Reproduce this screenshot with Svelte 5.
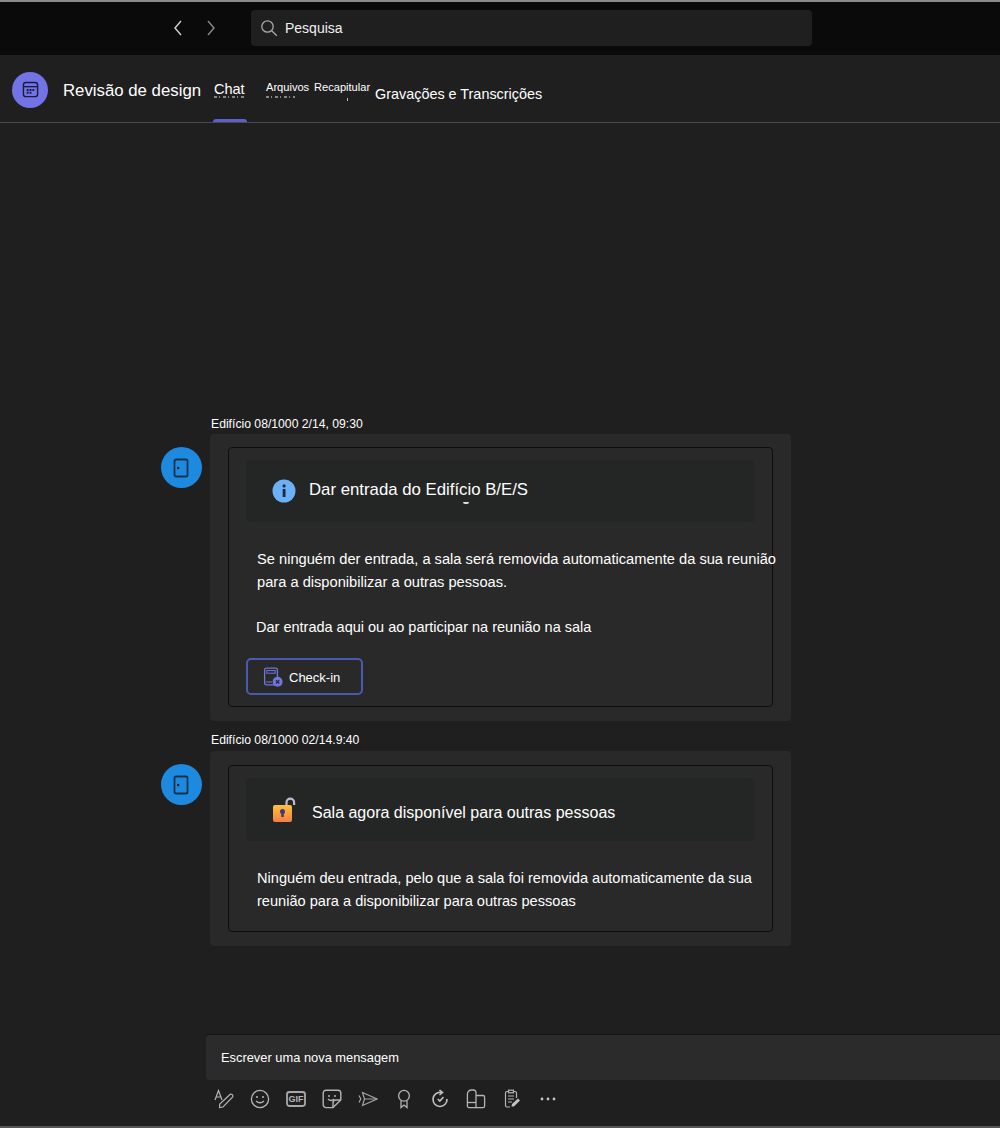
<script lang="ts">
  // Chat pane of a meeting room check-in conversation.
  const TABS = [
    { label: 'Chat', cls: 'chat' },
    { label: 'Arquivos', cls: 'small files' },
    { label: 'Recapitular', cls: 'small recap' },
    { label: 'Gravações e Transcrições', cls: 'rec' },
  ];
</script>

<div class="app">
  <div class="topbar">
    <div class="nav">
      <svg width="12" height="18" viewBox="0 0 12 18"><path d="M9 2 L3 9 L9 16" fill="none" stroke="#d0d0d0" stroke-width="1.4" /></svg>
      <svg width="12" height="18" viewBox="0 0 12 18"><path d="M3 2 L9 9 L3 16" fill="none" stroke="#8a8a8a" stroke-width="1.4" /></svg>
    </div>
    <div class="search">
      <svg width="18" height="18" viewBox="0 0 18 18"><circle cx="7.5" cy="7.5" r="5.7" fill="none" stroke="#a8a8a8" stroke-width="1.3" /><path d="M11.7 11.7 L16.8 16.8" stroke="#a8a8a8" stroke-width="1.3" /></svg>
      <span>Pesquisa</span>
    </div>
  </div>

  <header class="head">
    <div class="cal">
      <svg width="17" height="17" viewBox="0 0 18 18">
        <rect x="1.5" y="1.5" width="15" height="15" rx="2.6" fill="none" stroke="#1b1b3a" stroke-width="1.5" />
        <path d="M2 6 H16" stroke="#1b1b3a" stroke-width="1.4" />
        <path d="M5 8.5h2v2H5zM8 8.5h2v2H8zM11 8.5h2v2h-2zM5 11.5h2v2H5zM8 11.5h2v2H8z" fill="#1b1b3a" />
      </svg>
    </div>
    <div class="title">Revisão de design</div>
    <nav class="tabs">
      <!-- leftover marks under the labels -->
      <i class="ghost g-chat"></i>
      <i class="ghost g-files"></i>
      <i class="speck"></i>
      {#each TABS as tab (tab.label)}
        <span class={tab.cls}>{tab.label}</span>
      {/each}
      <i class="indicator"></i>
    </nav>
  </header>

  <main class="thread">
    <div class="msg">
      <div class="who">Edifício 08/1000 2/14, 09:30</div>
      <div class="avatar">
        <svg width="16" height="20" viewBox="0 0 16 20"><rect x="1.5" y="1.5" width="13" height="17" rx="1.6" fill="none" stroke="#10324f" stroke-width="1.8" /><circle cx="5.2" cy="10" r="1.2" fill="#0b2238" /></svg>
      </div>
      <div class="card first">
        <div class="inner">
          <div class="cardhead info">
            <svg width="24" height="24" viewBox="0 0 24 24"><circle cx="12" cy="12" r="11.5" fill="#6cb0f8" /><rect x="10.7" y="10" width="2.8" height="8" rx="0.6" fill="#1d2a3a" /><circle cx="12.1" cy="6.9" r="1.6" fill="#1d2a3a" /></svg>
            <span>Dar entrada do Edifício B/E/S</span>
            <i class="tick"></i>
          </div>
          <p class="body b1">Se ninguém der entrada, a sala será removida automaticamente da sua reunião<br />para a disponibilizar a outras pessoas.</p>
          <p class="body b2">Dar entrada aqui ou ao participar na reunião na sala</p>
          <button type="button" class="checkin">
            <svg width="20" height="20" viewBox="0 0 20 20">
              <rect x="1.6" y="1.2" width="12.8" height="16.6" rx="1.8" fill="none" stroke="#6f78d8" stroke-width="1.3" />
              <rect x="3.8" y="3.6" width="8.4" height="2.6" fill="none" stroke="#6f78d8" stroke-width="1" />
              <path d="M3 15h6" stroke="#6f78d8" stroke-width="1" />
              <circle cx="14.6" cy="14.8" r="5" fill="#6f78d8" />
              <path d="M12.9 13.1 L16.3 16.5 M16.3 13.1 L12.9 16.5" stroke="#22243c" stroke-width="1.2" />
            </svg>
            <span>Check-in</span>
          </button>
        </div>
      </div>
    </div>

    <div class="msg">
      <div class="who">Edifício 08/1000 02/14.9:40</div>
      <div class="avatar">
        <svg width="16" height="20" viewBox="0 0 16 20"><rect x="1.5" y="1.5" width="13" height="17" rx="1.6" fill="none" stroke="#10324f" stroke-width="1.8" /><circle cx="5.2" cy="10" r="1.2" fill="#0b2238" /></svg>
      </div>
      <div class="card second">
        <div class="inner">
          <div class="cardhead lock">
            <svg width="24" height="26" viewBox="0 0 24 26">
              <defs>
                <linearGradient id="lockfill" x1="0" y1="0" x2="0" y2="1">
                  <stop offset="0" stop-color="#fcc23c" />
                  <stop offset="1" stop-color="#f57f42" />
                </linearGradient>
              </defs>
              <path d="M14.5 9 V5.5 a3.8 3.8 0 0 1 7.6 0 V8" fill="none" stroke="#c3bacb" stroke-width="2.2" />
              <rect x="1" y="8" width="19" height="17" rx="2" fill="url(#lockfill)" />
              <circle cx="10.5" cy="14.5" r="2.5" fill="#453a78" />
              <rect x="9.2" y="15" width="2.6" height="5" fill="#453a78" />
            </svg>
            <span>Sala agora disponível para outras pessoas</span>
          </div>
          <p class="body b3">Ninguém deu entrada, pelo que a sala foi removida automaticamente da sua<br />reunião para a disponibilizar para outras pessoas</p>
        </div>
      </div>
    </div>
  </main>

  <footer class="compose">
    <div class="input">Escrever uma nova mensagem</div>
    <div class="tools">
      <svg width="20" height="20" viewBox="0 0 20 20" fill="none" stroke="#b4b4b4" stroke-width="1.2">
        <path d="M1 11 L4.5 1.5 L8 11 M2.2 8 H6.8" />
        <path d="M5.5 18.5 L5.8 15 L15.5 6 a1.7 1.7 0 0 1 3 2.2 L9 18 Z" />
      </svg>
      <svg width="20" height="20" viewBox="0 0 20 20" fill="none" stroke="#b4b4b4" stroke-width="1.3">
        <circle cx="10" cy="10" r="8.6" />
        <path d="M6 12 q4 3.6 8 0" />
        <circle cx="7" cy="8" r="1" fill="#b4b4b4" stroke="none" />
        <circle cx="13" cy="8" r="1" fill="#b4b4b4" stroke="none" />
      </svg>
      <svg width="20" height="20" viewBox="0 0 20 20">
        <rect x="1" y="3" width="18" height="14" rx="2.4" fill="none" stroke="#a8a8a8" stroke-width="1.8" />
        <text x="10" y="13.2" text-anchor="middle" class="gif">GIF</text>
      </svg>
      <svg width="20" height="20" viewBox="0 0 20 20" fill="none" stroke="#b4b4b4" stroke-width="1.4">
        <path d="M11 18.6 H4 a2.8 2.8 0 0 1 -2.8 -2.8 V4 A2.8 2.8 0 0 1 4 1.2 H16 A2.8 2.8 0 0 1 18.8 4 V11 Z" />
        <path d="M11 18.6 V14 a3 3 0 0 1 3 -3 H18.8" />
        <path d="M6 10 q3 3 6 0" />
        <circle cx="7" cy="7" r="1" fill="#b4b4b4" stroke="none" />
        <circle cx="13" cy="7" r="1" fill="#b4b4b4" stroke="none" />
      </svg>
      <svg width="20" height="20" viewBox="0 0 20 20" fill="none" stroke="#a4a4a4" stroke-width="1.2">
        <path d="M4.5 3.5 L19 10 L4.5 16.5 L6.5 10 Z" />
        <path d="M6.5 10 H19 M1 6.5 L2.8 10 L1 13.5" />
      </svg>
      <svg width="20" height="20" viewBox="0 0 20 20" fill="none" stroke="#b4b4b4" stroke-width="1.3">
        <circle cx="10" cy="6.8" r="5.4" />
        <path d="M7 11.5 V18.5 L10 16 L13 18.5 V11.5" />
      </svg>
      <svg width="20" height="20" viewBox="0 0 20 20" fill="none" stroke="#c4c4c4" stroke-width="1.6">
        <path d="M11 3.5 A7 7 0 1 0 17 10" />
        <path d="M9.5 1 L12.5 3.6 L9.5 6" />
        <path d="M7.8 10 L9.8 12 L13.5 8" />
      </svg>
      <svg width="20" height="20" viewBox="0 0 20 20" fill="none" stroke="#b4b4b4" stroke-width="1.3">
        <path d="M1.4 17 V5 a4 4 0 0 1 4 -4 H7.5 a2.5 2.5 0 0 1 2.5 2.5 V18.6 H3 a1.6 1.6 0 0 1 -1.6 -1.6 Z" />
        <path d="M10 6.5 H17 a1.6 1.6 0 0 1 1.6 1.6 V17 a1.6 1.6 0 0 1 -1.6 1.6 H10" />
        <path d="M1.4 13.5 H10" />
      </svg>
      <svg width="20" height="20" viewBox="0 0 20 20" fill="none" stroke="#b4b4b4" stroke-width="1.2">
        <path d="M8 18 H5 a1.5 1.5 0 0 1 -1.5 -1.5 V4 A1.5 1.5 0 0 1 5 2.5 H13 A1.5 1.5 0 0 1 14.5 4 V9" />
        <rect x="6.5" y="1.2" width="5" height="2.6" fill="#1f1f1f" />
        <path d="M6 7 H12 M6 10 H12 M6 13 H10" />
        <path d="M9.5 17.8 L10 15 L16 9.5 L18 11.5 L12.2 17.2 Z" fill="#c4c4c4" stroke="none" />
      </svg>
      <svg width="20" height="20" viewBox="0 0 20 20" fill="#c4c4c4">
        <circle cx="4" cy="10" r="1.4" />
        <circle cx="10" cy="10" r="1.4" />
        <circle cx="16" cy="10" r="1.4" />
      </svg>
    </div>
  </footer>
</div>

<style>
  :global(body) {
    margin: 0;
    background: #1f1f1f;
  }
  .app {
    height: 1128px;
    overflow: hidden;
    display: flex;
    flex-direction: column;
    background: #1f1f1f;
    color: #fff;
    font-family: "Liberation Sans", Arial, sans-serif;
    border-bottom: 2px solid #555;
    box-sizing: border-box;
  }
  .topbar {
    height: 55px;
    box-sizing: border-box;
    flex: 0 0 auto;
    display: flex;
    align-items: center;
    background: #0a0a0a;
    border-top: 2px solid #8a8a8a;
    padding: 0 0 2px 172px;
  }
  .nav {
    display: flex;
    gap: 21px;
    width: 79px;
  }
  .search {
    width: 561px;
    height: 36px;
    display: flex;
    align-items: center;
    gap: 7px;
    box-sizing: border-box;
    padding: 0 0 0 9px;
    border-radius: 4px;
    background: #1f1f1f;
    font-size: 14px;
    color: #f0f0f0;
  }
  .head {
    position: relative;
    height: 68px;
    box-sizing: border-box;
    flex: 0 0 auto;
    display: flex;
    align-items: center;
    padding: 0 0 0 12px;
    border-bottom: 1px solid #4a4a4a;
  }
  .cal {
    width: 36px;
    height: 36px;
    border-radius: 50%;
    background: #7373e8;
    display: flex;
    align-items: center;
    justify-content: center;
    margin: 2px 15px 0 0;
  }
  .title {
    font-size: 16.8px;
    margin-top: 4px;
    width: 151px;
  }
  .tabs {
    position: absolute;
    left: 0;
    top: 0;
    right: 0;
    bottom: 0;
    font-size: 14.5px;
  }
  .tabs span {
    position: absolute;
    white-space: nowrap;
  }
  .tabs .chat {
    left: 214px;
    top: 26px;
  }
  .tabs .small {
    font-size: 11.1px;
    top: 26px;
  }
  .tabs .files {
    left: 266px;
  }
  .tabs .recap {
    left: 314px;
  }
  .tabs .rec {
    left: 375px;
    top: 31px;
    font-size: 14.4px;
  }
  .ghost {
    position: absolute;
    top: 41px;
    height: 2px;
    opacity: 0.55;
    background: repeating-linear-gradient(90deg, #d8d8d8 0 3px, transparent 3px 5px, #d8d8d8 5px 6px, transparent 6px 9px);
  }
  .g-chat {
    left: 214px;
    width: 31px;
  }
  .g-files {
    left: 266px;
    width: 29px;
  }
  .speck {
    position: absolute;
    left: 347px;
    top: 43px;
    width: 1px;
    height: 3px;
    background: #bbb;
  }
  .indicator {
    position: absolute;
    left: 213px;
    bottom: 0;
    width: 34px;
    height: 3px;
    background: #5b5fc7;
    border-radius: 3px 3px 0 0;
  }
  .thread {
    flex: 1 1 auto;
    display: flex;
    flex-direction: column;
    padding: 292px 0 0 161px;
    gap: 11px;
  }
  .msg {
    display: grid;
    grid-template-columns: 40px 581px;
    column-gap: 9px;
  }
  .who {
    grid-column: 2;
    height: 19px;
    font-size: 12.2px;
    line-height: 18px;
    margin-left: 1px;
  }
  .msg + .msg .who {
    line-height: 17px;
  }
  .avatar {
    grid-column: 1;
    width: 41px;
    height: 41px;
    margin: 13px 0 0 -0.5px;
    border-radius: 50%;
    background: #1d8ae0;
    display: flex;
    align-items: center;
    justify-content: center;
  }
  .card {
    grid-column: 2;
    box-sizing: border-box;
    padding: 13px 18px 14px;
    border-radius: 4px;
    background: #292929;
  }
  .card.first {
    height: 287px;
  }
  .card.second {
    height: 195px;
    padding-top: 14px;
  }
  .inner {
    box-sizing: border-box;
    height: 100%;
    padding: 12px 17px 0;
    border: 1px solid #0e0e0e;
    border-radius: 4px;
    white-space: nowrap;
  }
  .cardhead {
    position: relative;
    display: flex;
    align-items: center;
    height: 62px;
    border-radius: 4px;
    background: #242625;
    font-size: 16px;
  }
  .info {
    gap: 13px;
    padding-left: 26px;
    font-size: 16.77px;
  }
  .info span {
    margin-bottom: 2px;
  }
  .tick {
    position: absolute;
    left: 217px;
    top: 42px;
    width: 6px;
    height: 2px;
    border-radius: 0 0 3px 3px;
    background: #ddd;
  }
  .lock {
    gap: 16px;
    padding-left: 26px;
    height: 63px;
  }
  .lock span {
    margin-top: 7px;
  }
  .body {
    margin: 0;
    font-size: 14.67px;
    line-height: 23px;
    color: #fff;
  }
  .b1 {
    padding: 26px 0 0 11px;
  }
  .b2 {
    padding: 22px 0 0 10px;
    font-size: 14.5px;
  }
  .b3 {
    padding: 26px 0 0 11px;
    font-size: 14.6px;
  }
  .checkin {
    display: flex;
    align-items: center;
    gap: 6px;
    width: 117px;
    height: 37px;
    margin: 19px 0 0;
    padding: 1px 0 0 15px;
    box-sizing: border-box;
    border: 2px solid #4a5ab0;
    border-radius: 5px;
    background: transparent;
    color: #fff;
    font: 13px "Liberation Sans", Arial, sans-serif;
  }
  .compose {
    flex: 0 0 auto;
    height: 92px;
    padding-left: 206px;
  }
  .input {
    height: 46px;
    box-sizing: border-box;
    padding-left: 15px;
    display: flex;
    align-items: center;
    border-radius: 4px 0 0 4px;
    border-top: 1px solid #141414;
    background: #2b2b2b;
    font-size: 12.86px;
  }
  .tools {
    display: flex;
    gap: 16px;
    padding: 9px 0 0 8px;
  }
  .gif {
    font: bold 9px "Liberation Sans", Arial, sans-serif;
    fill: #b4b4b4;
  }
</style>
